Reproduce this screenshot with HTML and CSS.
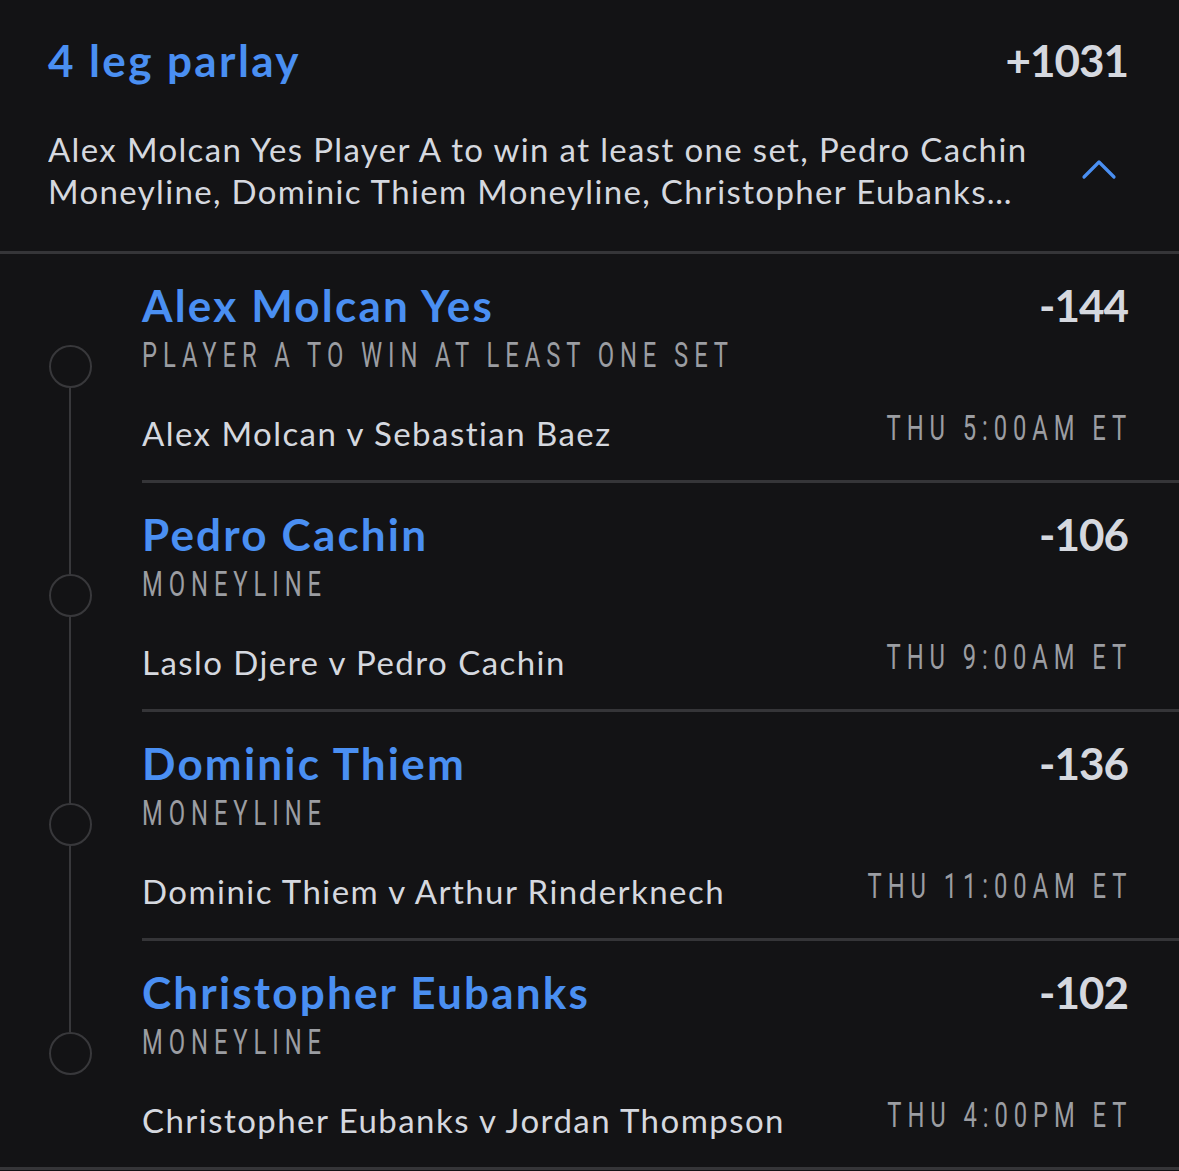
FILE: index.html
```html
<!DOCTYPE html>
<html lang="en">
<head>
<meta charset="utf-8">
<title>4 leg parlay</title>
<link rel="stylesheet" href="styles.css">
</head>
<body>
<div class="card">
  <header class="head">
    <div class="head-row">
      <h1 class="parlay-title">4 leg parlay</h1>
      <div class="parlay-odds">+1031</div>
    </div>
    <div class="summary-row">
      <p class="summary">Alex Molcan Yes Player A to win at least one set, Pedro Cachin Moneyline, Dominic Thiem Moneyline, Christopher Eubanks Moneyline</p>
      <svg class="chevron" width="36" height="22" viewBox="0 0 36 22" aria-hidden="true">
        <path d="M3 18 L18 3 L33 18" fill="none" stroke="#4a8ff2" stroke-width="3.2" stroke-linecap="round" stroke-linejoin="round"/>
      </svg>
    </div>
  </header>

  <section class="legs">
    <div class="leg leg-first">
      <div class="rail"><span class="seg seg-top"></span><span class="dot"></span><span class="seg seg-bottom"></span></div>
      <div class="leg-body">
        <div class="leg-row">
          <div class="leg-name">Alex Molcan Yes</div>
          <div class="leg-odds">-144</div>
        </div>
        <div class="leg-market"><span class="cond">PLAYER A TO WIN AT LEAST ONE SET</span></div>
        <div class="leg-row match-row">
          <div class="match">Alex Molcan v Sebastian Baez</div>
          <div class="time"><span class="cond">THU 5:00AM ET</span></div>
        </div>
      </div>
    </div>

    <div class="leg">
      <div class="rail"><span class="seg seg-top"></span><span class="dot"></span><span class="seg seg-bottom"></span></div>
      <div class="leg-body">
        <div class="leg-row">
          <div class="leg-name">Pedro Cachin</div>
          <div class="leg-odds">-106</div>
        </div>
        <div class="leg-market"><span class="cond">MONEYLINE</span></div>
        <div class="leg-row match-row">
          <div class="match">Laslo Djere v Pedro Cachin</div>
          <div class="time"><span class="cond">THU 9:00AM ET</span></div>
        </div>
      </div>
    </div>

    <div class="leg">
      <div class="rail"><span class="seg seg-top"></span><span class="dot"></span><span class="seg seg-bottom"></span></div>
      <div class="leg-body">
        <div class="leg-row">
          <div class="leg-name">Dominic Thiem</div>
          <div class="leg-odds">-136</div>
        </div>
        <div class="leg-market"><span class="cond">MONEYLINE</span></div>
        <div class="leg-row match-row">
          <div class="match">Dominic Thiem v Arthur Rinderknech</div>
          <div class="time"><span class="cond">THU 11:00AM ET</span></div>
        </div>
      </div>
    </div>

    <div class="leg leg-last">
      <div class="rail"><span class="seg seg-top"></span><span class="dot"></span><span class="seg seg-bottom"></span></div>
      <div class="leg-body">
        <div class="leg-row">
          <div class="leg-name">Christopher Eubanks</div>
          <div class="leg-odds">-102</div>
        </div>
        <div class="leg-market"><span class="cond">MONEYLINE</span></div>
        <div class="leg-row match-row">
          <div class="match">Christopher Eubanks v Jordan Thompson</div>
          <div class="time"><span class="cond">THU 4:00PM ET</span></div>
        </div>
      </div>
    </div>
  </section>
</div>
</body>
</html>
```

FILE: styles.css
```css
* { box-sizing: border-box; }

html, body {
  margin: 0;
  padding: 0;
  background: #131315;
}

body {
  font-family: Lato, "Open Sans", "Liberation Sans", sans-serif;
  color: #d5d8df;
}

.card {
  width: 1179px;
}

/* Header */
.head {
  padding: 35px 51px 39px 48px;
  border-bottom: 3px solid #353538;
}

.head-row {
  display: flex;
  justify-content: space-between;
  align-items: baseline;
  height: 50px;
}

.parlay-title {
  margin: 0;
  font-size: 44px;
  line-height: 50px;
  font-weight: 700;
  letter-spacing: 2.4px;
  color: #4a8ff2;
}

.parlay-odds {
  font-size: 44px;
  line-height: 50px;
  font-weight: 700;
  color: #d5d8df;
  letter-spacing: -1px;
}

.summary-row {
  display: flex;
  align-items: center;
  justify-content: space-between;
  margin-top: 43px;
}

.summary {
  margin: 0;
  width: 992px;
  font-size: 33px;
  line-height: 42px;
  letter-spacing: 1.35px;
  color: #d5d8df;
  display: -webkit-box;
  -webkit-box-orient: vertical;
  -webkit-line-clamp: 2;
  overflow: hidden;
}

.chevron {
  display: block;
  margin-right: 11px;
  flex-shrink: 0;
}

/* Legs */
.legs {
  border-bottom: 3px solid #353538;
}

.leg {
  display: grid;
  grid-template-columns: 142px 1fr;
}

.rail {
  display: flex;
  flex-direction: column;
  align-items: center;
  padding-right: 2px;
}

.seg {
  width: 2px;
  background: #38383b;
}

.seg-top {
  height: 91px;
}

.seg-bottom {
  flex: 1;
}

.leg-first .seg-top,
.leg-last .seg-bottom {
  background: transparent;
}

.dot {
  width: 43px;
  height: 43px;
  border: 2px solid #38383b;
  border-radius: 50%;
  flex-shrink: 0;
}

.leg-body {
  min-width: 0;
  padding: 26px 51px 26px 0;
  border-bottom: 3px solid #353538;
}

.leg-last .leg-body {
  border-bottom: none;
}

.leg-row {
  display: flex;
  justify-content: space-between;
  align-items: baseline;
}

.leg-name {
  font-size: 44px;
  line-height: 50px;
  font-weight: 700;
  letter-spacing: 2.2px;
  color: #4a8ff2;
}

.leg-odds {
  font-size: 44px;
  line-height: 50px;
  font-weight: 700;
  color: #d5d8df;
  letter-spacing: -1px;
}

.cond {
  display: inline-block;
  font-family: Roboto, "Liberation Sans", sans-serif;
  font-size: 35px;
  line-height: 40px;
  letter-spacing: 8.7px;
  color: #9b9da2;
  transform: scaleX(0.68);
  white-space: nowrap;
}

.leg-market {
  margin-top: 6px;
  height: 40px;
}

.leg-market .cond {
  transform-origin: left center;
}

.match-row {
  margin-top: 36px;
  align-items: center;
  height: 42px;
}

.match {
  flex: none;
  white-space: nowrap;
  font-size: 33px;
  line-height: 42px;
  letter-spacing: 1.45px;
  color: #d5d8df;
}

.time {
  flex: 1 1 auto;
  min-width: 0;
  display: flex;
  justify-content: flex-end;
  margin-top: -8px;
  margin-right: -4px;
}

.time .cond {
  flex: none;
  transform-origin: right center;
}
```
